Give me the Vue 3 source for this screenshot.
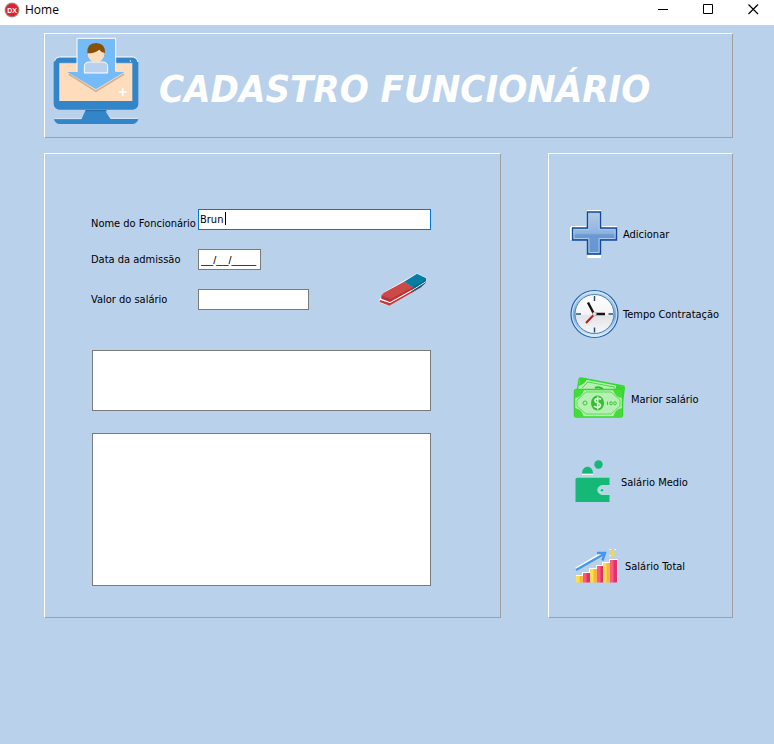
<script setup>
import { ref } from 'vue'

const nome = ref('Brun')
const admissao = ref('__/__/____')
const salario = ref('')
const resumo = ref('')
const lista = ref('')

const bars = [
  { x: 6, y: 35, a: '#f9e04c', b: '#f5b83d' },
  { x: 13, y: 32, a: '#fb5a7c', b: '#e0316c' },
  { x: 20, y: 28, a: '#f9e04c', b: '#f5b83d' },
  { x: 27, y: 25, a: '#fb5a7c', b: '#e0316c' },
  { x: 33, y: 22, a: '#f9e04c', b: '#f5b83d' },
  { x: 40, y: 19, a: '#fb5a7c', b: '#e0316c' }
]

function limpar() {
  nome.value = ''
  admissao.value = '__/__/____'
  salario.value = ''
}
</script>

<template>
  <div class="window">
    <header class="titlebar">
      <svg class="app-icon" viewBox="0 0 16 16" aria-hidden="true">
        <circle cx="8" cy="8" r="7.5" fill="#9a9a9e" />
        <circle cx="8" cy="8" r="6.5" fill="#e3202f" />
        <text x="8" y="10.5" text-anchor="middle" class="app-mark">DX</text>
      </svg>
      <span class="caption">Home</span>
      <div class="controls">
        <button type="button" aria-label="Minimizar">
          <svg viewBox="0 0 11 11"><path d="M0 5.5h10" stroke="#000" /></svg>
        </button>
        <button type="button" aria-label="Maximizar">
          <svg viewBox="0 0 11 11"><path d="M.5 .5h9v9h-9z" fill="none" stroke="#000" /></svg>
        </button>
        <button type="button" aria-label="Fechar">
          <svg viewBox="0 0 11 11"><path d="M.5 .5l9.500 9.500M10 .5l-9.500 9.500" stroke="#000" stroke-width="1.200" /></svg>
        </button>
      </div>
    </header>

    <main class="client">
      <section class="panel banner">
        <svg class="logo" viewBox="39 27 258 264" aria-hidden="true">
          <rect x="41" y="87" width="254" height="158" rx="17" fill="#3385c9" />
          <path d="M43 100Q45 88 58 87H110M227 87H280Q292 89 294 102" fill="none" stroke="#fff" stroke-width="3" />
          <rect x="60" y="107" width="217" height="112" fill="#ffdcbb" />
          <path d="M59 219V106H277" fill="none" stroke="#fff" stroke-width="2" />
          <path d="M86 138L168 190L252 138" fill="none" stroke="#cfb195" stroke-width="5" />
          <path d="M111 31H227V132H253L168 184L82 132H111Z" fill="#74bbf8" />
          <path d="M111 132V31H227V130" fill="none" stroke="#fff" stroke-width="3" />
          <path d="M133 135V115Q134 102 148 102H188Q202 102 203 115V135Z" fill="#b9d1eb" stroke="#fff" stroke-width="3" />
          <ellipse cx="168" cy="78" rx="25" ry="25" fill="#ffdcbb" />
          <path d="M142 76Q140 45 168 45Q196 45 195 75Q184 74 178 65Q166 76 142 76Z" fill="#885108" />
          <path d="M248 180V205M236 192H261" stroke="#fff" stroke-width="5" />
          <circle cx="271" cy="99" r="2" fill="#fff" />
          <path d="M137 246H198L212 272H295Q292 287 277 288H60Q44 287 42 272H125Z" fill="#3385c9" />
          <path d="M137 248H199" stroke="#24669f" stroke-width="3" />
          <path d="M43 272H125M198 250L212 271H294" fill="none" stroke="#fff" stroke-width="2" />
        </svg>
        <h1>CADASTRO FUNCIONÁRIO</h1>
      </section>

      <form class="panel form" @submit.prevent>
        <div class="fields">
          <label class="low" for="nome">Nome do Foncionário</label>
          <div class="name-box">
            <input id="nome" v-model="nome" class="active" type="text" />
            <span class="caret"></span>
          </div>
          <label for="admissao">Data da admissão</label>
          <input id="admissao" v-model="admissao" class="date" type="text" />
          <label for="salario">Valor do salário</label>
          <input id="salario" v-model="salario" class="money" type="text" />
          <button class="eraser" type="button" aria-label="Limpar" @click="limpar">
            <svg viewBox="897 234 144 99">
              <path d="M898 314L914 290L1011 235L1040 249L1037 264L1021 279L927 332L900 323Z" fill="#fff" />
              <path d="M900 315L930 324L993 289V282L1037 256V263L1022 278L928 332L899 321Z" fill="#c43a3c" />
              <path d="M993 283L1038 256L1036 265L1021 277L993 293Z" fill="#075f83" />
              <path d="M902 312L931 322L996 286L1037 260" fill="none" stroke="#fff" stroke-width="3" />
              <path d="M905 300L914 292L972 260L1001 277L930 318L904 308Z" fill="#cb4948" />
              <path d="M905 302L933 312L1001 275V281L930 321L904 311Z" fill="#b63336" />
              <path d="M972 260L1011 236L1039 250L1037 256L1001 278Z" fill="#077da2" />
              <path d="M1001 274L1039 251L1037 259L1001 281Z" fill="#076b91" />
            </svg>
          </button>
        </div>
        <textarea v-model="resumo" class="short" aria-label="Resumo"></textarea>
        <textarea v-model="lista" class="tall" aria-label="Lista"></textarea>
      </form>

      <nav class="panel actions" aria-label="Ações">
        <button type="button">
          <svg width="48" height="50" viewBox="0 0 48 50">
            <defs>
              <linearGradient id="plusFill" x1="0" y1="0" x2="0" y2="1">
                <stop offset="0" stop-color="#b5cae6" />
                <stop offset=".5" stop-color="#8fb3df" />
                <stop offset=".55" stop-color="#6b99d2" />
                <stop offset="1" stop-color="#6695d0" />
              </linearGradient>
            </defs>
            <path d="M17 2H31M1 18H16M32 18H47M1 18V31" stroke="#fff" stroke-width="2" />
            <path d="M17.500 46H31V49H17.500z" fill="#fff" />
            <path d="M17.500 3H30.500V19H46.500V31H30.500V45H17.500V31H2.500V19H17.500Z" fill="url(#plusFill)" stroke="#154a96" stroke-width="1.400" />
            <path d="M19 4.500H29V20.500H45V29.500H29V43.500H19V29.500H4V20.500H19Z" fill="none" stroke="#a9c8ed" />
          </svg>
          <span>Adicionar</span>
        </button>
        <button type="button">
          <svg width="48" height="50" viewBox="0 0 48 50">
            <defs>
              <linearGradient id="rim" x1="0" y1="0" x2="0" y2="1">
                <stop offset="0" stop-color="#c4ddf6" />
                <stop offset=".55" stop-color="#76aee4" />
                <stop offset="1" stop-color="#d8edfc" />
              </linearGradient>
              <linearGradient id="dial" x1="0" y1="0" x2="0" y2="1">
                <stop offset="0" stop-color="#fff" />
                <stop offset=".5" stop-color="#f5f5f7" />
                <stop offset=".55" stop-color="#e2e3e7" />
                <stop offset="1" stop-color="#f8f8fa" />
              </linearGradient>
            </defs>
            <circle cx="24.500" cy="25" r="23.500" fill="url(#rim)" stroke="#2d63a3" stroke-width="1.200" />
            <circle cx="24.500" cy="25" r="22.300" fill="none" stroke="#e8f4ff" stroke-width=".7" />
            <circle cx="24.500" cy="25" r="19.500" fill="url(#dial)" stroke="#4a7eb8" />
            <path d="M24.500 7V12M24.500 38.500V43.500M6 25H11M38.500 25H43" stroke="#244f80" stroke-width="1.500" />
            <path d="M24.500 25L16 34" stroke="#b71820" stroke-width="2" />
            <path d="M24 25L18 13.500M25 25H35" stroke="#151515" stroke-width="2.400" />
            <circle cx="24.500" cy="25" r="2" fill="#e6dede" stroke="#a99" stroke-width=".5" />
          </svg>
          <span>Tempo Contratação</span>
        </button>
        <button type="button">
          <svg width="56" height="50" viewBox="0 0 56 50">
            <path d="M11 4L53 12Q55 13 54 16L51 38L5 30L9 6Q9 4 11 4Z" fill="#b5f0b2" stroke="#36d82e" stroke-width="1.500" />
            <path d="M10 4L17 5Q15 10 9 12ZM46 11L54 13L52 25L46 16Z" fill="#36d82e" />
            <path d="M18 8L44 13L47 17M18 8L12 14" fill="none" stroke="#49d842" />
            <path d="M25 14Q29 12 33 15" fill="none" stroke="#30b92c" stroke-width="2" />
            <rect x="4.500" y="15.500" width="48" height="27.500" rx="2" fill="#b5f0b2" stroke="#36d82e" stroke-width="1.500" />
            <path d="M5 16H14Q12 23 5 24ZM52 16H43Q45 23 52 24ZM5 43V34Q12 35 14 43ZM52 43V34Q45 35 43 43Z" fill="#43dc3b" />
            <path d="M16 18H41L50 26V32L41 40H16L7 32V26Z" fill="none" stroke="#62d95d" />
            <ellipse cx="27.500" cy="29" rx="6.500" ry="7.500" fill="#36bd32" />
            <path d="M31 25.500C29 23.500 24.500 24.500 25 27C25.500 29.500 30.500 28.500 30.500 31C30.500 34 26 34 24 32M27.700 22.500V35.500" fill="none" stroke="#d4fbd1" stroke-width="1.700" />
            <circle cx="15" cy="29" r="2" fill="none" stroke="#39c735" />
            <path d="M37.500 27.500V31" stroke="#39c735" />
            <ellipse cx="41" cy="29.300" rx="1.300" ry="1.600" fill="none" stroke="#39c735" />
            <ellipse cx="45" cy="29.300" rx="1.300" ry="1.600" fill="none" stroke="#39c735" />
          </svg>
          <span>Marior salário</span>
        </button>
        <button type="button">
          <svg width="46" height="50" viewBox="0 0 46 50">
            <circle cx="28.500" cy="7.500" r="4.200" fill="#15b877" />
            <path d="M12 16.500C12 7.500 23 7.500 23 16.500Z" fill="#15b877" />
            <path d="M12 17.500H23" stroke="#fff" />
            <path d="M7 20.500H39.500V28H33Q27.500 29 27.500 33T33 38H39.500V45H5.500V22Z" fill="#15b877" />
            <path d="M6 20H39.500M39.500 28.500H33Q28 29 28 33T33 37.500H39.500" fill="none" stroke="#a6e6d2" />
            <circle cx="32" cy="33.300" r="1.800" fill="#15b877" stroke="#e5fff6" stroke-width=".6" />
          </svg>
          <span>Salário Medio</span>
        </button>
        <button type="button">
          <svg width="50" height="50" viewBox="0 0 50 50">
            <path d="M6 41V34L12 34V31H19V27H26V24H32V21H39V18H47.500V41Z" fill="#fff" />
            <template v-for="bar in bars" :key="bar.x">
              <rect :x="bar.x" :y="bar.y" width="4" :height="41.5 - bar.y" :fill="bar.a" />
              <rect :x="bar.x + 3.5" :y="bar.y" width="3.500" :height="41.5 - bar.y" :fill="bar.b" />
            </template>
            <path d="M6 28L33 12" stroke="#fff" stroke-width="3" />
            <path d="M6 29L34 13" stroke="#4397ee" stroke-width="2.200" />
            <path d="M27 12L35 12L32.500 19.500" fill="none" stroke="#4397ee" stroke-width="2.400" />
            <path d="M39.500 8.500H41M44.500 8.500H46M39.500 14.500H41" stroke="#fff" />
            <path d="M40.500 9L44.500 10.500L41 12L44.500 13L41 15M42.500 8V16" fill="none" stroke="#f7d64b" stroke-width="1.300" />
          </svg>
          <span>Salário Total</span>
        </button>
      </nav>
    </main>
  </div>
</template>

<style>
body {
  margin: 0;
  background: #b9d1eb;
}
</style>

<style scoped>
.window {
  min-height: 100vh;
  background: #b9d1eb;
  color: #000;
  font: 11px/13px Tahoma, "DejaVu Sans Condensed", "DejaVu Sans", sans-serif;
}

button {
  padding: 0;
  border: 0;
  background: none;
  color: inherit;
  font: inherit;
}

svg {
  display: block;
  flex: none;
}

.titlebar {
  display: flex;
  height: 25px;
  padding-left: 4px;
  background: #fff;
}

.app-icon {
  width: 16px;
  height: 16px;
  margin-top: 2px;
}

.app-mark {
  fill: #fff;
  font: bold 7px "Liberation Sans", sans-serif;
}

.caption {
  flex: 1;
  padding-left: 5px;
  font: 12px/20px "Segoe UI", "Open Sans", sans-serif;
}

.controls {
  display: flex;
  align-items: flex-start;
}

.controls button {
  box-sizing: border-box;
  display: flex;
  justify-content: center;
  width: 45px;
  padding: 4px 0 0 3px;
}

.controls svg {
  width: 11px;
  height: 11px;
}

.client {
  display: grid;
  grid-template-columns: 1fr 185px;
  column-gap: 47px;
  row-gap: 15px;
  padding: 8px 41px 24px 44px;
}

.panel {
  box-sizing: border-box;
  border: 1px solid;
  border-color: #fff #a0a0a0 #a0a0a0 #fff;
}

.banner {
  grid-column: 1 / -1;
  display: flex;
  align-items: center;
  gap: 20px;
  padding: 3px 8px 12px;
}

.logo {
  width: 86px;
  height: 88px;
}

h1 {
  margin: 0;
  padding-top: 16px;
  color: #fff;
  font: italic bold 38px/44px Tahoma, "DejaVu Sans Condensed", "DejaVu Sans", sans-serif;
  white-space: nowrap;
}

.form {
  padding: 55px 69px 31px 46px;
}

.fields {
  display: grid;
  grid-template-columns: 107px auto 1fr;
  grid-auto-rows: 21px;
  row-gap: 19px;
  align-items: center;
  margin-bottom: 40px;
}

.fields label {
  grid-column: 1;
  white-space: nowrap;
}

.fields .low {
  align-self: end;
}

input,
textarea {
  box-sizing: border-box;
  display: block;
  width: 100%;
  margin: 0;
  border: 1px solid #7a7a7a;
  border-radius: 0;
  outline: 0;
  background: #fff;
  color: #000;
  font: inherit;
  resize: none;
}

input {
  height: 21px;
  padding: 0 1px;
}

.name-box {
  position: relative;
  grid-column: 2 / -1;
}

.active {
  border-color: #0078d7;
}

.caret {
  position: absolute;
  top: 3px;
  left: 27px;
  width: 1px;
  height: 13px;
  background: #000;
}

.date {
  width: 63px;
  padding: 0 2px;
  font-family: "Liberation Sans", sans-serif;
}

.money {
  width: 111px;
}

.eraser {
  grid-column: 3;
  grid-row: 2 / 4;
  place-self: end;
  padding: 0 4px 4px 0;
}

.eraser svg {
  width: 48px;
  height: 33px;
}

textarea {
  width: calc(100% - 1px);
  margin-left: 1px;
}

.short {
  height: 61px;
  margin-bottom: 22px;
}

.tall {
  height: 153px;
}

.actions {
  display: grid;
  grid-template-rows: 80px 80px 90px 76px 92px;
  padding: 40px 4px 5px 21px;
}

.actions button {
  display: flex;
  align-items: center;
  gap: 5px;
  white-space: nowrap;
}

.actions svg {
  overflow: visible;
}
</style>
